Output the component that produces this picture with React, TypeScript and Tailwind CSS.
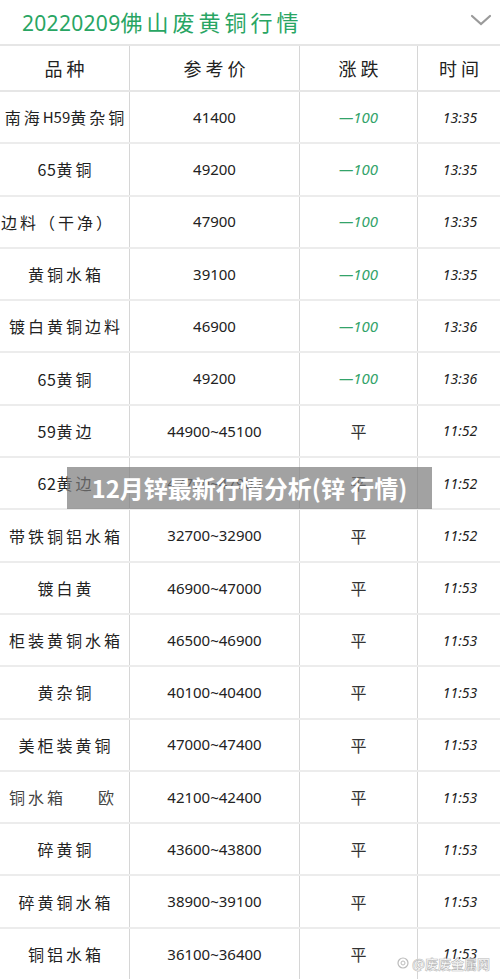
import React from "react";

type Row = { name: React.ReactNode; price: string; change: string; time: string; align?: "left" | "split" };

const d = (s: string) => <span className="tracking-[0.5px]">{s}</span>;

const rows: Row[] = [
  { name: <>南海<span className="tracking-[0px] text-[15px]">H59</span>黄杂铜</>, price: "41400", change: "—100", time: "13:35" },
  { name: <>{d("65")}黄铜</>, price: "49200", change: "—100", time: "13:35" },
  { name: "边料（干净）", price: "47900", change: "—100", time: "13:35", align: "left" },
  { name: "黄铜水箱", price: "39100", change: "—100", time: "13:35" },
  { name: "镀白黄铜边料", price: "46900", change: "—100", time: "13:36" },
  { name: <>{d("65")}黄铜</>, price: "49200", change: "—100", time: "13:36" },
  { name: <>{d("59")}黄边</>, price: "44900~45100", change: "平", time: "11:52" },
  { name: <>{d("62")}黄边</>, price: "47700~47900", change: "平", time: "11:52" },
  { name: "带铁铜铝水箱", price: "32700~32900", change: "平", time: "11:52" },
  { name: "镀白黄", price: "46900~47000", change: "平", time: "11:53" },
  { name: "柜装黄铜水箱", price: "46500~46900", change: "平", time: "11:53" },
  { name: "黄杂铜", price: "40100~40400", change: "平", time: "11:53" },
  { name: "美柜装黄铜", price: "47000~47400", change: "平", time: "11:53" },
  { name: "", price: "42100~42400", change: "平", time: "11:53", align: "split" },
  { name: "碎黄铜", price: "43600~43800", change: "平", time: "11:53" },
  { name: "碎黄铜水箱", price: "38900~39100", change: "平", time: "11:53" },
  { name: "铜铝水箱", price: "36100~36400", change: "平", time: "11:53" },
];

const cjk = { fontFamily: '"Noto Sans CJK SC", "Noto Sans", sans-serif' };
const num = { fontFamily: '"Noto Sans", "Noto Sans CJK SC", sans-serif' };

export default function App() {
  return (
    <div className="relative w-[500px] h-[979px] overflow-hidden bg-white text-[#222]" style={cjk}>
      <div className="h-[44px] flex items-center justify-between pl-[22px] pr-[8px]">
        <div className="text-[22px] text-[#28a563] tracking-[4px] leading-none" style={cjk}>
          <span className="tracking-[0.3px] text-[21px]" style={num}>20220209</span>佛山废黄铜行情
        </div>
        <svg width="22" height="14" viewBox="0 0 22 14" className="mb-[4px]">
          <path d="M2 3 L11 11 L20 3" fill="none" stroke="#9a9a9a" strokeWidth="2.2" strokeLinecap="round" />
        </svg>
      </div>

      <div className="border-t-2 border-[#e6e6e6]">
        <div className="grid grid-cols-[130px_170px_118px_82px] h-[46px] border-b-2 border-[#e6e6e6] text-[18px] tracking-[4px]">
          <div className="flex items-center justify-center border-r border-[#d6d6d6] pl-[4px]">品种</div>
          <div className="flex items-center justify-center border-r border-[#d6d6d6] pl-[4px]">参考价</div>
          <div className="flex items-center justify-center border-r border-[#d6d6d6] pl-[4px]">涨跌</div>
          <div className="flex items-center justify-center pl-[4px]">时间</div>
        </div>
        {rows.map((r, i) => (
          <div key={i} className="grid grid-cols-[130px_170px_118px_82px] h-[52.3px] border-b-2 border-[#ececec]">
            {r.align === "split" ? (
              <div className="flex items-center justify-between pl-[9px] pr-[12px] border-r border-[#d6d6d6] text-[16px] tracking-[3px] text-[#444]">
                <span>铜水箱</span>
                <span>欧</span>
              </div>
            ) : r.align === "left" ? (
              <div className="flex items-center justify-start pl-[1px] border-r border-[#d6d6d6] text-[16px] tracking-[3px]">
                {r.name}
              </div>
            ) : (
              <div className="flex items-center justify-center pl-[3px] border-r border-[#d6d6d6] text-[16px] tracking-[3px] whitespace-nowrap">
                {r.name}
              </div>
            )}
            <div className="flex items-center justify-center border-r border-[#d6d6d6] text-[15px]" style={num}>
              {r.price}
            </div>
            <div
              className={
                "flex items-center justify-center border-r border-[#d6d6d6] " +
                (r.change === "平" ? "text-[16px] text-[#333]" : "text-[15px] text-[#33a36a] italic")
              }
              style={r.change === "平" ? cjk : num}
            >
              {r.change}
            </div>
            <div className="flex items-center justify-center text-[14px] italic pl-[2px]" style={num}>
              {r.time}
            </div>
          </div>
        ))}
      </div>

      <div className="absolute left-[67px] top-[467px] w-[365px] h-[42px] bg-[#7a7a7a]/70 flex items-center justify-center">
        <span className="text-white font-bold text-[24px] leading-none" style={cjk}>
          12月锌最新行情分析(锌 行情)
        </span>
      </div>

      <div className="absolute right-[10px] bottom-[6px] flex items-center gap-[3px] text-[13px] text-white font-bold" style={{ ...cjk, WebkitTextStroke: "0.6px #b8b8b8" }}>
        <svg width="12" height="12" viewBox="0 0 12 12">
          <circle cx="6" cy="6" r="5" fill="none" stroke="#bbb" strokeWidth="1.2" />
          <circle cx="6" cy="6" r="2" fill="none" stroke="#bbb" strokeWidth="1" />
        </svg>
        <span>@废废金属网</span>
      </div>
    </div>
  );
}
